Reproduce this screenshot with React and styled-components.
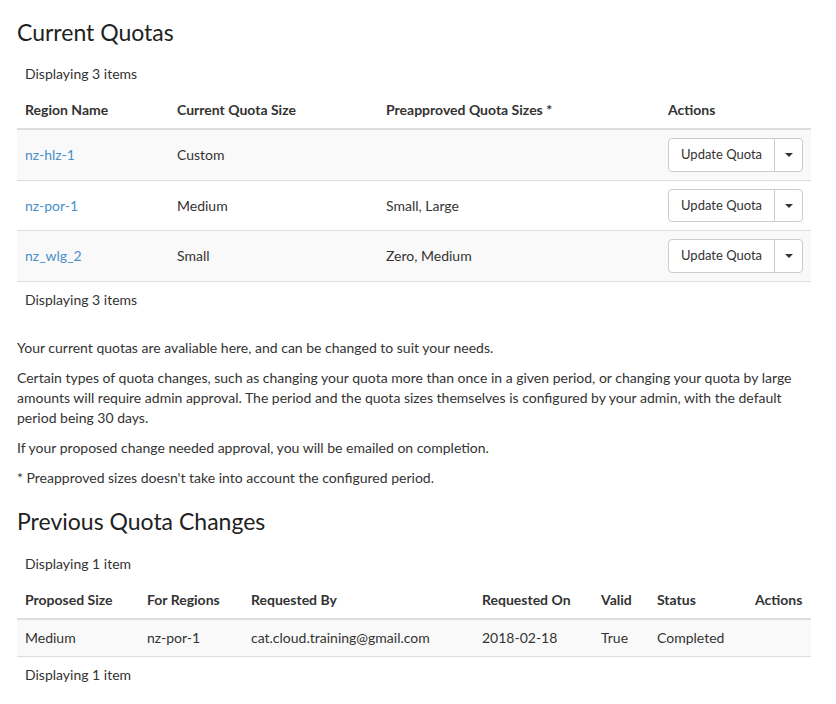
import React from 'react';
import styled, { createGlobalStyle } from 'styled-components';

const GlobalStyle = createGlobalStyle`
  body {
    margin: 0;
    background: #fff;
    font-family: Lato, "Open Sans", sans-serif;
    font-size: 14px;
    line-height: 1.428571;
    color: #333;
  }
`;

const Page = styled.div`
  padding: 0 25px 20px 17px;
`;

const Heading = styled.h3`
  margin: ${(p) => (p.$follows ? '20px 0 12px' : '19px 0 11px')};
  font-size: 23px;
  font-weight: 400;
  line-height: 1.15;
  color: #222;
`;

const Table = styled.table`
  width: 100%;
  table-layout: fixed;
  border-collapse: collapse;
  border-spacing: 0;
  margin-bottom: 20px;
`;

const Col = styled.col`
  width: ${(p) => p.$w}px;
`;

const CaptionCell = styled.th`
  padding: 8px;
  text-align: left;
  font-weight: 400;
`;

const Th = styled.th`
  padding: 8px;
  text-align: left;
  font-weight: 700;
  border-bottom: 2px solid #ddd;
  white-space: nowrap;
`;

const Row = styled.tr`
  background: ${(p) => (p.$odd ? '#f9f9f9' : '#fff')};
`;

const Td = styled.td`
  padding: 8px;
  vertical-align: middle;
  border-top: 1px solid #ddd;
  white-space: nowrap;
`;

const FootCell = styled.td`
  padding: 8px;
  border-top: 1px solid #ddd;
`;

const Link = styled.a`
  color: #4a90c9;
  text-decoration: none;
`;

const BtnGroup = styled.div`
  display: inline-flex;
  vertical-align: middle;
`;

const Btn = styled.button`
  font-family: inherit;
  font-size: 13px;
  line-height: 19.5px;
  padding: 6px 12px;
  color: #333;
  background: #fff;
  border: 1px solid #ccc;
  border-radius: 4px 0 0 4px;
  cursor: pointer;
`;

const CaretBtn = styled(Btn)`
  width: 29px;
  padding: 6px 0;
  margin-left: -1px;
  border-radius: 0 4px 4px 0;
  display: flex;
  align-items: center;
  justify-content: center;
`;

const Caret = styled.span`
  width: 0;
  height: 0;
  border-top: 4px solid #333;
  border-left: 4px solid transparent;
  border-right: 4px solid transparent;
`;

const P = styled.p`
  margin: 0 0 10px;
`;

const quotas = [
  { region: 'nz-hlz-1', size: 'Custom', pre: '' },
  { region: 'nz-por-1', size: 'Medium', pre: 'Small, Large' },
  { region: 'nz_wlg_2', size: 'Small', pre: 'Zero, Medium' },
];

const changes = [
  {
    size: 'Medium',
    regions: 'nz-por-1',
    by: 'cat.cloud.training@gmail.com',
    on: '2018-02-18',
    valid: 'True',
    status: 'Completed',
  },
];

const quotaCols = [
  ['Region Name', 152],
  ['Current Quota Size', 209],
  ['Preapproved Quota Sizes *', 282],
  ['Actions', 151],
];

const changeCols = [
  ['Proposed Size', 122],
  ['For Regions', 104],
  ['Requested By', 231],
  ['Requested On', 119],
  ['Valid', 56],
  ['Status', 98],
  ['Actions', 64],
];

const Header = ({ label, cols }) => (
  <>
    <colgroup>
      {cols.map(([name, w]) => (
        <Col key={name} $w={w} />
      ))}
    </colgroup>
    <thead>
      <tr>
        <CaptionCell colSpan={cols.length}>{label}</CaptionCell>
      </tr>
      <tr>
        {cols.map(([name]) => (
          <Th key={name}>{name}</Th>
        ))}
      </tr>
    </thead>
  </>
);

const App = () => (
  <>
    <GlobalStyle />
    <Page>
      <Heading>Current Quotas</Heading>
      <Table>
        <Header label="Displaying 3 items" cols={quotaCols} />
        <tbody>
          {quotas.map((q, i) => (
            <Row key={q.region} $odd={i % 2 === 0}>
              <Td>
                <Link href="#">{q.region}</Link>
              </Td>
              <Td>{q.size}</Td>
              <Td>{q.pre}</Td>
              <Td>
                <BtnGroup>
                  <Btn>Update Quota</Btn>
                  <CaretBtn aria-label="More actions">
                    <Caret />
                  </CaretBtn>
                </BtnGroup>
              </Td>
            </Row>
          ))}
        </tbody>
        <tfoot>
          <tr>
            <FootCell colSpan={4}>Displaying 3 items</FootCell>
          </tr>
        </tfoot>
      </Table>

      <P>Your current quotas are avaliable here, and can be changed to suit your needs.</P>
      <P>
        Certain types of quota changes, such as changing your quota more than once in a given
        period, or changing your quota by large amounts will require admin approval. The period
        and the quota sizes themselves is configured by your admin, with the default period
        being 30 days.
      </P>
      <P>If your proposed change needed approval, you will be emailed on completion.</P>
      <P>* Preapproved sizes doesn't take into account the configured period.</P>

      <Heading $follows>Previous Quota Changes</Heading>
      <Table>
        <Header label="Displaying 1 item" cols={changeCols} />
        <tbody>
          {changes.map((c, i) => (
            <Row key={c.on} $odd={i % 2 === 0}>
              <Td>{c.size}</Td>
              <Td>{c.regions}</Td>
              <Td>{c.by}</Td>
              <Td>{c.on}</Td>
              <Td>{c.valid}</Td>
              <Td>{c.status}</Td>
              <Td />
            </Row>
          ))}
        </tbody>
        <tfoot>
          <tr>
            <FootCell colSpan={7}>Displaying 1 item</FootCell>
          </tr>
        </tfoot>
      </Table>
    </Page>
  </>
);

export default App;
